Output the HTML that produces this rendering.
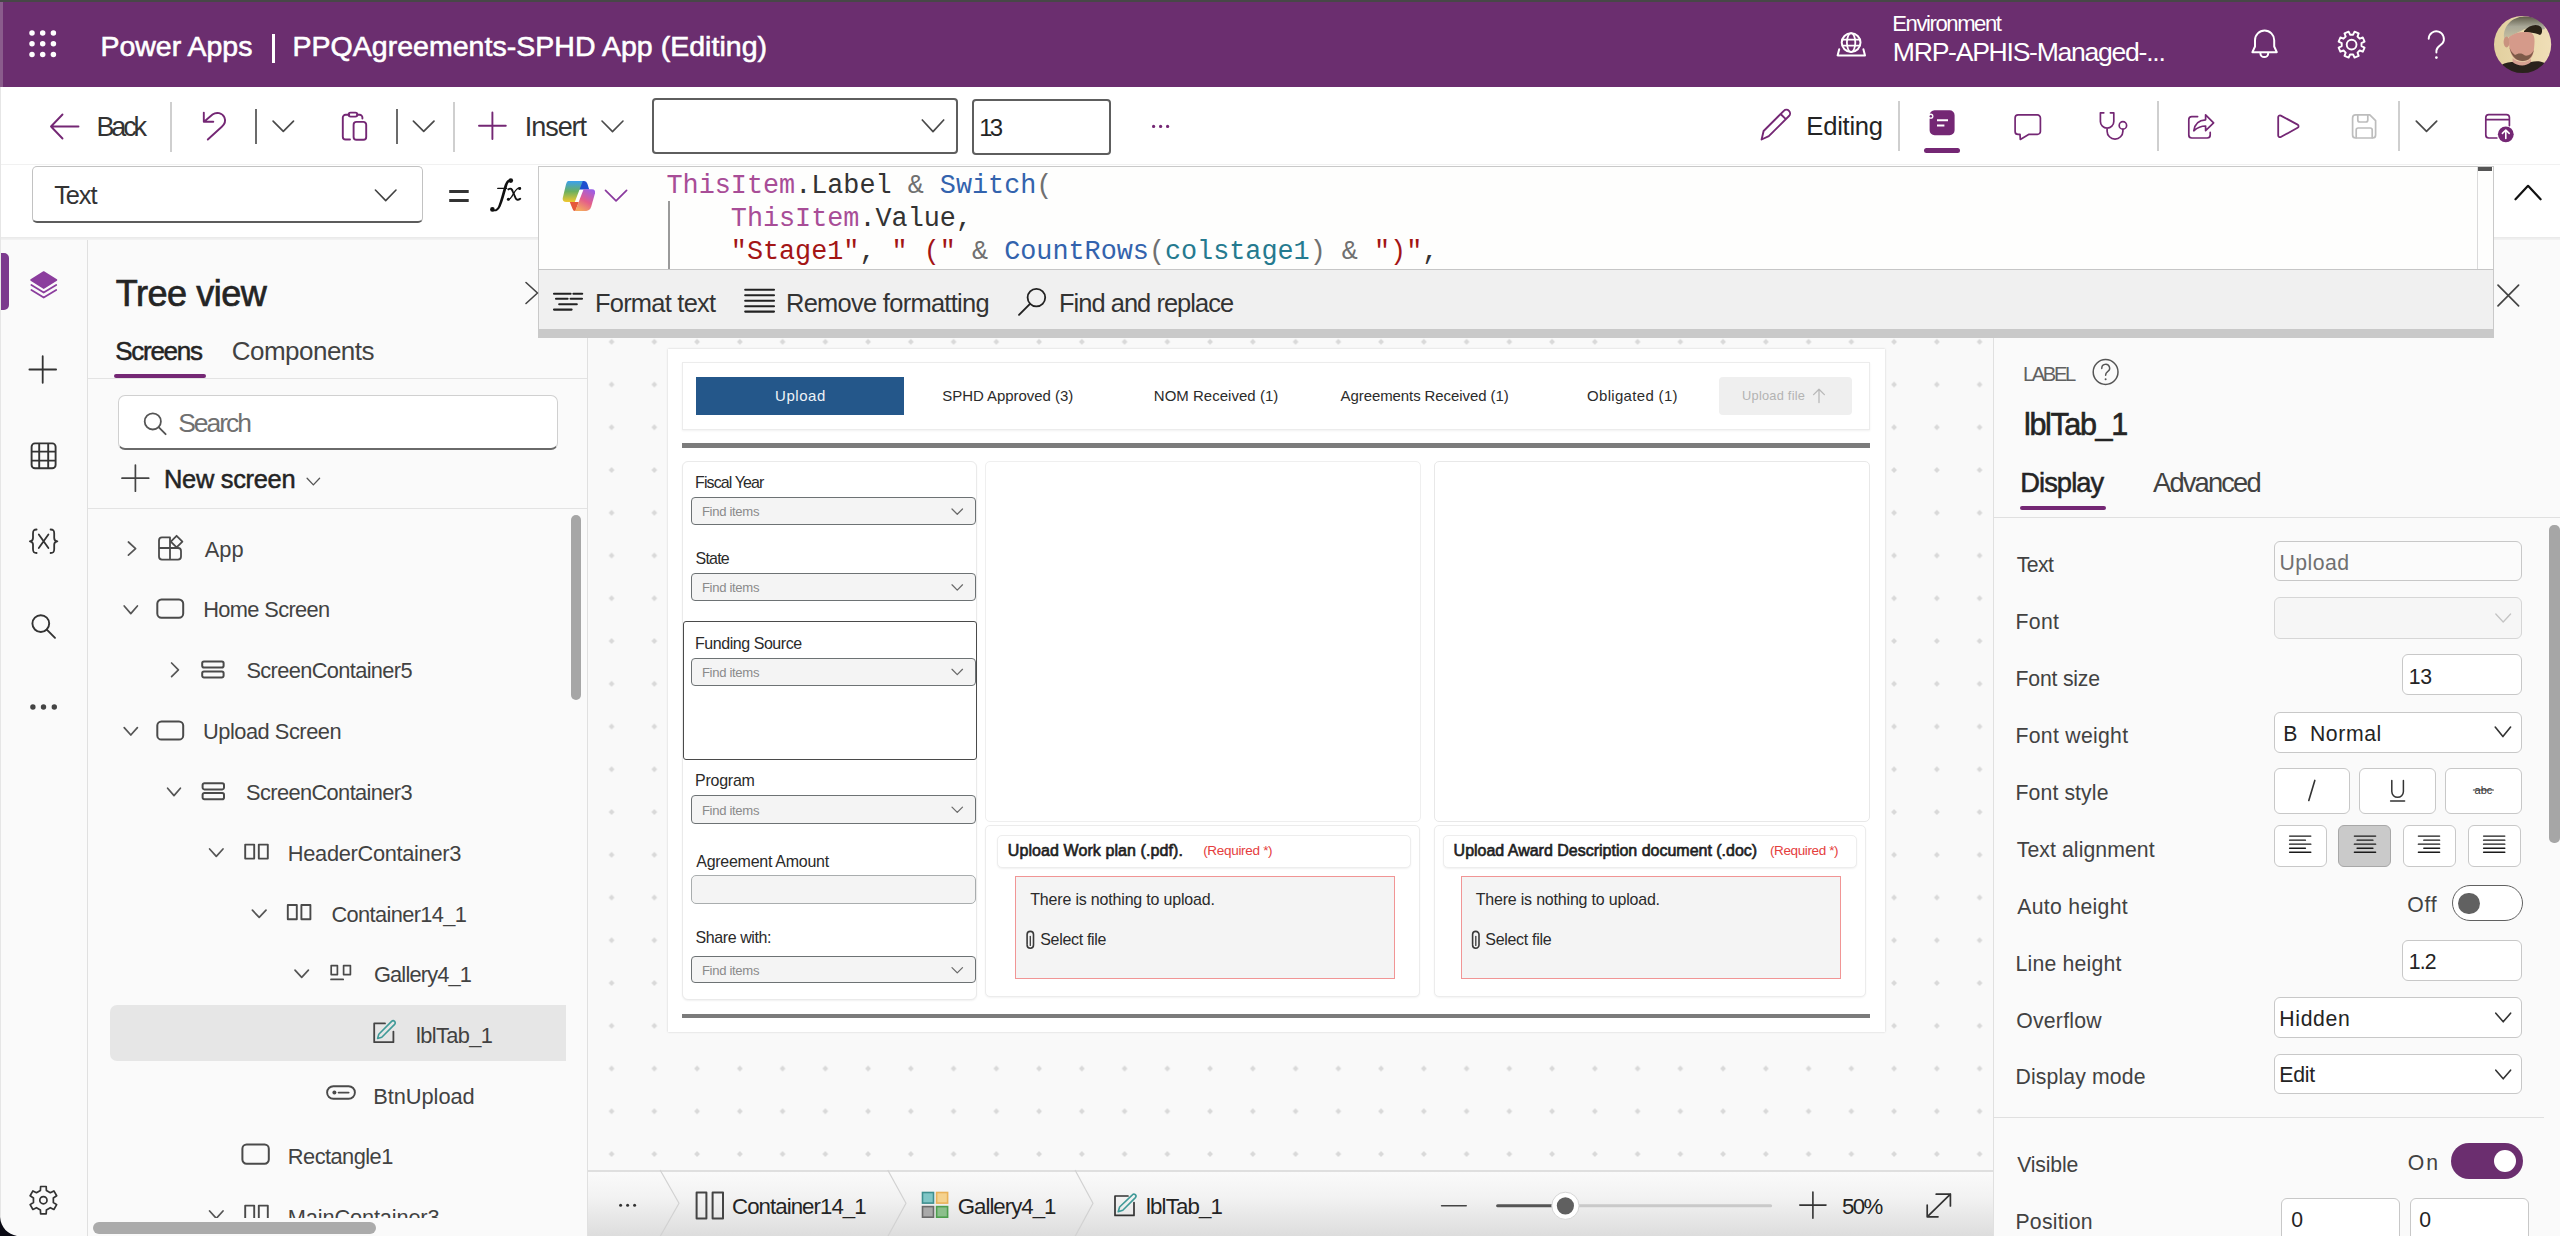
<!DOCTYPE html>
<html><head><meta charset="utf-8"><title>Power Apps</title>
<style>

html,body{margin:0;padding:0;width:2560px;height:1236px;overflow:hidden;background:#fafafa;font-family:"Liberation Sans",sans-serif;}
body{position:relative}
.t{position:absolute;white-space:pre;line-height:1;}
.a{position:absolute;box-sizing:border-box}
svg.ov{position:absolute;left:0;top:0;overflow:visible}

</style></head><body>
<div class="a" style="left:0px;top:0px;width:2560px;height:87px;background:#6b2e6f"></div>
<div class="a" style="left:0px;top:0px;width:2560px;height:2px;background:#474747"></div>
<div class="a" style="left:0px;top:2px;width:3px;height:85px;background:#8a5c8c"></div>
<div class="a" style="left:0px;top:87px;width:2560px;height:79px;background:#ffffff"></div>
<div class="a" style="left:0px;top:87px;width:1px;height:1149px;background:#e6e6e6;z-index:1"></div>
<div class="a" style="left:170px;top:102px;width:1.5999999999999943px;height:50px;background:#cfcfcf"></div>
<div class="a" style="left:255px;top:109px;width:1.6000000000000227px;height:35px;background:#6b6b6b"></div>
<div class="a" style="left:396px;top:109px;width:1.6000000000000227px;height:35px;background:#6b6b6b"></div>
<div class="a" style="left:453px;top:102px;width:1.6000000000000227px;height:50px;background:#cfcfcf"></div>
<div class="a" style="left:1898px;top:101px;width:1.599999999999909px;height:50px;background:#cfcfcf"></div>
<div class="a" style="left:2157px;top:101px;width:1.599999999999909px;height:50px;background:#cfcfcf"></div>
<div class="a" style="left:2398px;top:101px;width:1.599999999999909px;height:50px;background:#cfcfcf"></div>
<div class="a" style="left:652px;top:98.3px;width:305.5px;height:56.000000000000014px;border:2px solid #5e5e5e;border-radius:4px;background:#fff"></div>
<div class="a" style="left:972px;top:98.5px;width:139px;height:56.0px;border:2px solid #5e5e5e;border-radius:4px;background:#fff"></div>
<div class="a" style="left:1924px;top:147.5px;width:36px;height:5.5px;background:#742774;border-radius:3px"></div>
<div class="a" style="left:0px;top:166px;width:2560px;height:71px;background:#ffffff"></div>
<div class="a" style="left:0px;top:163.5px;width:2560px;height:1.0px;background:#f1f1f1"></div>
<div class="a" style="left:0px;top:237px;width:2560px;height:5px;background:linear-gradient(rgba(0,0,0,0.07),rgba(0,0,0,0))"></div>
<div class="a" style="left:31.5px;top:166px;width:391.0px;height:56.5px;border:1px solid #c2c2c2;border-bottom:2px solid #5c5c5c;border-radius:5px;background:#fff"></div>
<div class="a" style="left:0px;top:240px;width:87px;height:996px;background:#fafafa"></div>
<div class="a" style="left:87px;top:240px;width:1px;height:996px;background:#e0e0e0"></div>
<div class="a" style="left:88px;top:240px;width:499px;height:996px;background:#fafafa"></div>
<div class="a" style="left:587px;top:240px;width:1px;height:996px;background:#e0e0e0"></div>
<div class="a" style="left:588px;top:240px;width:1405px;height:930px;background:#f9f9f9"></div>
<div class="a" style="left:1993px;top:240px;width:1px;height:996px;background:#e0e0e0"></div>
<div class="a" style="left:1994px;top:240px;width:566px;height:996px;background:#fafafa"></div>
<div class="a" style="left:1px;top:253px;width:7.5px;height:57px;background:#7c3a8e;border-radius:0 5px 5px 0"></div>
<div class="a" style="left:113.5px;top:373.5px;width:92.5px;height:4.0px;background:#742774;border-radius:2px"></div>
<div class="a" style="left:88px;top:377.5px;width:499px;height:1.0px;background:#e3e3e3"></div>
<div class="a" style="left:117.5px;top:394.5px;width:440.5px;height:55.5px;border:1px solid #d0d0d0;border-bottom:2px solid #6a6a6a;border-radius:7px;background:#fff"></div>
<div class="a" style="left:88px;top:507.5px;width:499px;height:1.0px;background:#e3e3e3"></div>
<div class="a" style="left:571px;top:515px;width:10px;height:185px;background:#a6a6a6;border-radius:5px"></div>
<div class="a" style="left:109.5px;top:1004.5px;width:456.5px;height:56.5px;background:#e6e6e6;border-radius:7px 0 0 7px"></div>
<div class="a" style="left:93px;top:1222px;width:283px;height:12px;background:#ababab;border-radius:6px"></div>
<svg class="ov" width="2560" height="1236" style="left:0;top:0">
<defs><pattern id="dots" x="611.6" y="341.8" width="42.75" height="42.75" patternUnits="userSpaceOnUse"><path d="M-2.9 0 L0 -2.9 L2.9 0 L0 2.9 Z" fill="#d9d9d9"/><path d="M39.85 0 L42.75 -2.9 L45.65 0 L42.75 2.9 Z" fill="#d9d9d9"/><path d="M-2.9 42.75 L0 39.85 L2.9 42.75 L0 45.65 Z" fill="#d9d9d9"/><path d="M39.85 42.75 L42.75 39.85 L45.65 42.75 L42.75 45.65 Z" fill="#d9d9d9"/></pattern></defs>
<rect x="590" y="330" width="1401" height="838" fill="url(#dots)"/></svg>
<div class="a" style="left:667.5px;top:348.5px;width:1217.0px;height:683.5px;background:#fff;box-shadow:0 0 2px rgba(0,0,0,0.18)"></div>
<div class="a" style="left:681.5px;top:362px;width:1188.5px;height:67.5px;background:#fff;border:1px solid #ececec;box-shadow:0 1px 2px rgba(0,0,0,0.06)"></div>
<div class="a" style="left:696px;top:376.5px;width:208px;height:38.0px;background:#24578a"></div>
<div class="a" style="left:1718.5px;top:376.5px;width:133.5px;height:38.0px;background:#efefef;border-radius:4px"></div>
<div class="a" style="left:681.5px;top:443px;width:1188.5px;height:4.5px;background:#7b7b7b"></div>
<div class="a" style="left:681.5px;top:461px;width:295.5px;height:539px;background:#fff;border:1px solid #eaeaea;border-radius:6px;box-shadow:0 1px 2px rgba(0,0,0,0.06)"></div>
<div class="a" style="left:682.5px;top:621px;width:294.0px;height:139px;border:1.5px solid #4a4a4a;border-radius:3px;background:#fff"></div>
<div class="a" style="left:691px;top:497.2px;width:284.5px;height:28.000000000000057px;background:#f4f4f4;border:1.5px solid #6d7274;border-radius:4px"></div>
<div class="a" style="left:691px;top:573px;width:284.5px;height:27.5px;background:#f4f4f4;border:1.5px solid #6d7274;border-radius:4px"></div>
<div class="a" style="left:691px;top:657.5px;width:284.5px;height:28.200000000000045px;background:#f4f4f4;border:1.5px solid #6d7274;border-radius:4px"></div>
<div class="a" style="left:691px;top:795.3px;width:284.5px;height:28.600000000000023px;background:#f4f4f4;border:1.5px solid #6d7274;border-radius:4px"></div>
<div class="a" style="left:691px;top:955.8px;width:284.5px;height:27.700000000000045px;background:#f4f4f4;border:1.5px solid #6d7274;border-radius:4px"></div>
<div class="a" style="left:690.7px;top:874.8px;width:284.9px;height:29.200000000000045px;background:#f4f4f4;border:1px solid #a9adae;border-radius:5px"></div>
<div class="a" style="left:985px;top:461px;width:435.5px;height:361px;background:#fff;border:1px solid #efefef;border-radius:5px"></div>
<div class="a" style="left:1434px;top:461px;width:436px;height:361px;background:#fff;border:1px solid #e8e8e8;border-radius:5px"></div>
<div class="a" style="left:985px;top:825.3px;width:435px;height:172.20000000000005px;background:#fff;border:1px solid #ececec;border-radius:5px;box-shadow:0 1px 2px rgba(0,0,0,0.05)"></div>
<div class="a" style="left:997px;top:834.6px;width:414px;height:33.10000000000002px;background:#fff;border:1px solid #ededed;border-radius:5px;box-shadow:0 1px 2px rgba(0,0,0,0.06)"></div>
<div class="a" style="left:1014.6px;top:875.5px;width:380.4px;height:103.79999999999995px;background:#f4f4f4;border:1.5px solid #f19595"></div>
<div class="a" style="left:1433.8px;top:825.3px;width:432.20000000000005px;height:172.20000000000005px;background:#fff;border:1px solid #ececec;border-radius:5px;box-shadow:0 1px 2px rgba(0,0,0,0.05)"></div>
<div class="a" style="left:1442.5px;top:834.6px;width:414.79999999999995px;height:33.10000000000002px;background:#fff;border:1px solid #ededed;border-radius:5px;box-shadow:0 1px 2px rgba(0,0,0,0.06)"></div>
<div class="a" style="left:1460.6px;top:875.5px;width:380.10000000000014px;height:103.79999999999995px;background:#f4f4f4;border:1.5px solid #f19595"></div>
<div class="a" style="left:682px;top:1014px;width:1188px;height:4.2000000000000455px;background:#7b7b7b"></div>
<div class="a" style="left:588px;top:1170px;width:1405px;height:2px;background:#dfdfdf"></div>
<div class="a" style="left:588px;top:1172px;width:1405px;height:64px;background:linear-gradient(#fafafa,#f2f2f2 40%,#dddddd)"></div>
<div class="a" style="left:538px;top:166px;width:1955.5px;height:104px;background:#fefefd;border:1px solid #c9c9c9"></div>
<div class="a" style="left:2477px;top:167px;width:1px;height:102px;background:#dadada"></div>
<div class="a" style="left:2478px;top:167.3px;width:13.5px;height:3.6999999999999886px;background:#555"></div>
<div class="a" style="left:668.2px;top:201px;width:1.3999999999999773px;height:68px;background:#9a9a9a"></div>
<div class="a" style="left:538px;top:269px;width:1955.5px;height:60.30000000000001px;background:#f0f0f0;border-left:1px solid #c9c9c9;border-right:1px solid #c9c9c9"></div>
<div class="a" style="left:538px;top:329.3px;width:1955.5px;height:8.699999999999989px;background:#c9c9c9"></div>
<div class="a" style="left:538px;top:269px;width:1955.5px;height:1.1999999999999886px;background:#c6c6c6"></div>
<div class="a" style="left:2020px;top:505.5px;width:86px;height:4.0px;background:#742774;border-radius:2px"></div>
<div class="a" style="left:1994px;top:517px;width:566px;height:1px;background:#e0e0e0"></div>
<div class="a" style="left:2549px;top:525px;width:10.5px;height:317.5px;background:#a6a6a6;border-radius:5px"></div>
<div class="a" style="left:2274px;top:540.5px;width:248px;height:40.799999999999955px;border:1px solid #c8c8c8;border-radius:6px;background:#fbfbfb"></div>
<div class="a" style="left:2274px;top:597.2px;width:248px;height:41.5px;border:1px solid #d6d6d6;border-radius:6px;background:#f6f6f6"></div>
<div class="a" style="left:2402px;top:654.3px;width:120px;height:41.10000000000002px;border:1px solid #c8c8c8;border-radius:6px;background:#fff"></div>
<div class="a" style="left:2274px;top:711.7px;width:248px;height:41.09999999999991px;border:1px solid #c8c8c8;border-radius:6px;background:#fff"></div>
<div class="a" style="left:2273.8px;top:768px;width:76.69999999999982px;height:45.60000000000002px;border:1px solid #c8c8c8;border-radius:6px;background:#fff"></div>
<div class="a" style="left:2359.3px;top:768px;width:77.09999999999991px;height:45.60000000000002px;border:1px solid #c8c8c8;border-radius:6px;background:#fff"></div>
<div class="a" style="left:2444.8px;top:768px;width:77.19999999999982px;height:45.60000000000002px;border:1px solid #c8c8c8;border-radius:6px;background:#fff"></div>
<div class="a" style="left:2273.8px;top:825px;width:53.399999999999636px;height:41.89999999999998px;border:1px solid #c8c8c8;border-radius:6px;background:#fff"></div>
<div class="a" style="left:2338.4px;top:825px;width:53.0px;height:41.89999999999998px;border:1px solid #a8a8a8;border-radius:6px;background:#cacaca"></div>
<div class="a" style="left:2402.6px;top:825px;width:53.80000000000018px;height:41.89999999999998px;border:1px solid #c8c8c8;border-radius:6px;background:#fff"></div>
<div class="a" style="left:2467.7px;top:825px;width:53.0px;height:41.89999999999998px;border:1px solid #c8c8c8;border-radius:6px;background:#fff"></div>
<div class="a" style="left:2451.6px;top:885.3px;width:71.09999999999991px;height:35.40000000000009px;border:1.5px solid #616161;border-radius:18px;background:#fff"></div>
<div class="a" style="left:2458.1px;top:892.6px;width:21.59999999999991px;height:21.600000000000023px;background:#616161;border-radius:50%"></div>
<div class="a" style="left:2402.2px;top:939.5px;width:119.80000000000018px;height:41.39999999999998px;border:1px solid #c8c8c8;border-radius:6px;background:#fff"></div>
<div class="a" style="left:2273.8px;top:996.9px;width:248.19999999999982px;height:41.000000000000114px;border:1px solid #c8c8c8;border-radius:6px;background:#fff"></div>
<div class="a" style="left:2273.8px;top:1053.9px;width:248.19999999999982px;height:40.59999999999991px;border:1px solid #c8c8c8;border-radius:6px;background:#fff"></div>
<div class="a" style="left:1994px;top:1117px;width:550px;height:1px;background:#e0e0e0"></div>
<div class="a" style="left:2450.8px;top:1143.4px;width:71.89999999999964px;height:35.399999999999864px;background:#6b2e6f;border-radius:18px"></div>
<div class="a" style="left:2493.6px;top:1150.4px;width:22.0px;height:22.0px;background:#fff;border-radius:50%"></div>
<div class="a" style="left:2281px;top:1197.6px;width:119.40000000000009px;height:52.40000000000009px;border:1px solid #c8c8c8;border-radius:6px;background:#fff"></div>
<div class="a" style="left:2409.5px;top:1197.6px;width:119.30000000000018px;height:52.40000000000009px;border:1px solid #c8c8c8;border-radius:6px;background:#fff"></div>
<svg class="ov" width="2560" height="1236" style="z-index:6"><path d="M0 1217 L0 1236 L17 1236 C8 1234 1 1228 0 1217 Z" fill="#0a0a14"/></svg>
<div class="t" style="left:100.42px;top:31.88px;font-size:28.49px;color:#fff;-webkit-text-stroke:0.6px #fff;">Power Apps</div>
<div class="a" style="left:272.4px;top:34.2px;width:2.5px;height:28.799999999999997px;background:#fff"></div>
<div class="t" style="left:292.52px;top:31.88px;font-size:28.49px;color:#fff;letter-spacing:0.037px;-webkit-text-stroke:0.6px #fff;">PPQAgreements-SPHD App (Editing)</div>
<div class="t" style="left:1892.23px;top:13.30px;font-size:22.09px;color:#fff;letter-spacing:-1.420px;">Environment</div>
<div class="t" style="left:1892.87px;top:39.48px;font-size:26.60px;color:#fff;letter-spacing:-1.281px;">MRP-APHIS-Managed-...</div>
<div class="t" style="left:96.44px;top:113.81px;font-size:27.03px;color:#333;letter-spacing:-3.158px;">Back</div>
<div class="t" style="left:524.87px;top:113.81px;font-size:27.03px;color:#333;letter-spacing:-1.081px;">Insert</div>
<div class="t" style="left:979.20px;top:115.70px;font-size:23.98px;color:#242424;letter-spacing:-2.890px;">13</div>
<div class="t" style="left:1806.35px;top:114.45px;font-size:25.58px;color:#242424;letter-spacing:-0.251px;">Editing</div>
<div class="t" style="left:54.19px;top:183.17px;font-size:25.44px;color:#333;letter-spacing:-1.090px;">Text</div>
<div class="t" style="left:594.97px;top:290.77px;font-size:25.44px;color:#333;letter-spacing:-0.751px;">Format text</div>
<div class="t" style="left:785.97px;top:290.77px;font-size:25.44px;color:#333;letter-spacing:-0.705px;">Remove formatting</div>
<div class="t" style="left:1058.97px;top:290.77px;font-size:25.44px;color:#333;letter-spacing:-0.960px;">Find and replace</div>
<div class="t" style="left:666.50px;top:172.66px;font-family:'Liberation Mono';font-size:26.8px;color:#a84d97">ThisItem</div>
<div class="t" style="left:795.14px;top:172.66px;font-family:'Liberation Mono';font-size:26.8px;color:#333333">.Label</div>
<div class="t" style="left:891.62px;top:172.66px;font-family:'Liberation Mono';font-size:26.8px;color:#707070"> &amp; </div>
<div class="t" style="left:939.86px;top:172.66px;font-family:'Liberation Mono';font-size:26.8px;color:#3363ad">Switch</div>
<div class="t" style="left:1036.34px;top:172.66px;font-family:'Liberation Mono';font-size:26.8px;color:#707070">(</div>
<div class="t" style="left:730.80px;top:205.86px;font-family:'Liberation Mono';font-size:26.8px;color:#a84d97">ThisItem</div>
<div class="t" style="left:859.44px;top:205.86px;font-family:'Liberation Mono';font-size:26.8px;color:#333333">.Value,</div>
<div class="t" style="left:730.80px;top:239.06px;font-family:'Liberation Mono';font-size:26.8px;color:#a31515">"Stage1"</div>
<div class="t" style="left:859.44px;top:239.06px;font-family:'Liberation Mono';font-size:26.8px;color:#333333">, </div>
<div class="t" style="left:891.60px;top:239.06px;font-family:'Liberation Mono';font-size:26.8px;color:#a31515">" ("</div>
<div class="t" style="left:955.92px;top:239.06px;font-family:'Liberation Mono';font-size:26.8px;color:#707070"> &amp; </div>
<div class="t" style="left:1004.16px;top:239.06px;font-family:'Liberation Mono';font-size:26.8px;color:#3363ad">CountRows</div>
<div class="t" style="left:1148.88px;top:239.06px;font-family:'Liberation Mono';font-size:26.8px;color:#707070">(</div>
<div class="t" style="left:1164.96px;top:239.06px;font-family:'Liberation Mono';font-size:26.8px;color:#257a8f">colstage1</div>
<div class="t" style="left:1309.68px;top:239.06px;font-family:'Liberation Mono';font-size:26.8px;color:#707070">)</div>
<div class="t" style="left:1325.76px;top:239.06px;font-family:'Liberation Mono';font-size:26.8px;color:#707070"> &amp; </div>
<div class="t" style="left:1374.00px;top:239.06px;font-family:'Liberation Mono';font-size:26.8px;color:#a31515">")"</div>
<div class="t" style="left:1422.24px;top:239.06px;font-family:'Liberation Mono';font-size:26.8px;color:#333333">,</div>
<div class="t" style="left:115.78px;top:276.29px;font-size:36.05px;color:#242424;letter-spacing:-0.473px;-webkit-text-stroke:0.7px #242424;">Tree view</div>
<div class="t" style="left:115.33px;top:337.58px;font-size:26.02px;color:#242424;letter-spacing:-1.310px;-webkit-text-stroke:0.5px #242424;">Screens</div>
<div class="t" style="left:231.70px;top:337.58px;font-size:26.02px;color:#424242;letter-spacing:-0.523px;">Components</div>
<div class="t" style="left:178.21px;top:409.81px;font-size:26.45px;color:#707070;letter-spacing:-1.982px;">Search</div>
<div class="t" style="left:163.97px;top:466.97px;font-size:25.44px;color:#242424;letter-spacing:-0.301px;-webkit-text-stroke:0.5px #242424;">New screen</div>
<div class="t" style="left:204.70px;top:539.24px;font-size:21.80px;color:#424242;letter-spacing:0.052px;">App</div>
<div class="t" style="left:203.26px;top:599.44px;font-size:21.80px;color:#424242;letter-spacing:-0.642px;">Home Screen</div>
<div class="t" style="left:246.42px;top:659.54px;font-size:21.80px;color:#424242;letter-spacing:-0.637px;">ScreenContainer5</div>
<div class="t" style="left:202.96px;top:721.44px;font-size:21.80px;color:#424242;letter-spacing:-0.463px;">Upload Screen</div>
<div class="t" style="left:246.02px;top:782.14px;font-size:21.80px;color:#424242;letter-spacing:-0.604px;">ScreenContainer3</div>
<div class="t" style="left:287.86px;top:842.54px;font-size:21.80px;color:#424242;letter-spacing:-0.315px;">HeaderContainer3</div>
<div class="t" style="left:331.41px;top:903.54px;font-size:21.80px;color:#424242;letter-spacing:-0.620px;">Container14_1</div>
<div class="t" style="left:373.91px;top:964.14px;font-size:21.80px;color:#424242;letter-spacing:-0.815px;">Gallery4_1</div>
<div class="t" style="left:416.08px;top:1024.84px;font-size:21.80px;color:#424242;letter-spacing:-0.613px;">lblTab_1</div>
<div class="t" style="left:373.26px;top:1085.54px;font-size:21.80px;color:#424242;letter-spacing:-0.042px;">BtnUpload</div>
<div class="t" style="left:287.86px;top:1146.24px;font-size:21.80px;color:#424242;letter-spacing:-0.539px;">Rectangle1</div>
<div class="a" style="left:200px;top:1190px;width:380px;height:28px;overflow:hidden">
<div class="t" style="left:87.86px;top:16.84px;font-size:21.80px;color:#424242;letter-spacing:-0.167px;">MainContainer3</div>
</div>
<div class="t" style="left:775.08px;top:388.53px;font-size:14.97px;color:#eef2f7;letter-spacing:0.559px;">Upload</div>
<div class="t" style="left:942.33px;top:388.53px;font-size:14.97px;color:#2b2b2b;letter-spacing:-0.035px;">SPHD Approved (3)</div>
<div class="t" style="left:1153.80px;top:388.53px;font-size:14.97px;color:#2b2b2b;letter-spacing:0.034px;">NOM Received (1)</div>
<div class="t" style="left:1340.60px;top:388.53px;font-size:14.97px;color:#2b2b2b;letter-spacing:-0.076px;">Agreements Received (1)</div>
<div class="t" style="left:1587.03px;top:388.53px;font-size:14.97px;color:#2b2b2b;letter-spacing:0.333px;">Obligated (1)</div>
<div class="t" style="left:1742.04px;top:389.67px;font-size:12.79px;color:#b3b3b3;letter-spacing:0.255px;">Upload file</div>
<div class="t" style="left:695.02px;top:475.37px;font-size:15.99px;color:#2a2a2a;letter-spacing:-0.891px;">Fiscal Year</div>
<div class="t" style="left:695.58px;top:551.47px;font-size:15.99px;color:#2a2a2a;letter-spacing:-0.814px;">State</div>
<div class="t" style="left:695.02px;top:636.17px;font-size:15.99px;color:#2a2a2a;letter-spacing:-0.442px;">Funding Source</div>
<div class="t" style="left:695.02px;top:773.27px;font-size:15.99px;color:#2a2a2a;letter-spacing:-0.237px;">Program</div>
<div class="t" style="left:696.30px;top:853.97px;font-size:15.99px;color:#2a2a2a;letter-spacing:-0.267px;">Agreement Amount</div>
<div class="t" style="left:695.58px;top:930.47px;font-size:15.99px;color:#2a2a2a;letter-spacing:-0.416px;">Share with:</div>
<div class="t" style="left:701.95px;top:505.43px;font-size:13.08px;color:#8a8a8a;letter-spacing:-0.315px;">Find items</div>
<div class="t" style="left:701.95px;top:581.23px;font-size:13.08px;color:#8a8a8a;letter-spacing:-0.315px;">Find items</div>
<div class="t" style="left:701.95px;top:665.73px;font-size:13.08px;color:#8a8a8a;letter-spacing:-0.315px;">Find items</div>
<div class="t" style="left:701.95px;top:803.53px;font-size:13.08px;color:#8a8a8a;letter-spacing:-0.315px;">Find items</div>
<div class="t" style="left:701.95px;top:964.03px;font-size:13.08px;color:#8a8a8a;letter-spacing:-0.315px;">Find items</div>
<div class="t" style="left:1007.80px;top:843.17px;font-size:15.99px;color:#1f1f1f;letter-spacing:0.092px;-webkit-text-stroke:0.65px #1f1f1f;">Upload Work plan (.pdf).</div>
<div class="t" style="left:1203.19px;top:843.56px;font-size:13.52px;color:#e53d3d;letter-spacing:-0.316px;">(Required *)</div>
<div class="t" style="left:1030.28px;top:891.87px;font-size:15.99px;color:#2a2a2a;letter-spacing:-0.177px;">There is nothing to upload.</div>
<div class="t" style="left:1040.28px;top:932.47px;font-size:15.99px;color:#2a2a2a;letter-spacing:-0.314px;">Select file</div>
<div class="t" style="left:1453.60px;top:843.17px;font-size:15.99px;color:#1f1f1f;-webkit-text-stroke:0.65px #1f1f1f;">Upload Award Description document (.doc)</div>
<div class="t" style="left:1769.99px;top:843.56px;font-size:13.52px;color:#e53d3d;letter-spacing:-0.389px;">(Required *)</div>
<div class="t" style="left:1475.68px;top:891.87px;font-size:15.99px;color:#2a2a2a;letter-spacing:-0.188px;">There is nothing to upload.</div>
<div class="t" style="left:1485.28px;top:932.47px;font-size:15.99px;color:#2a2a2a;letter-spacing:-0.294px;">Select file</div>
<div class="t" style="left:732.09px;top:1195.68px;font-size:22.24px;color:#242424;letter-spacing:-0.946px;">Container14_1</div>
<div class="t" style="left:957.79px;top:1195.68px;font-size:22.24px;color:#242424;letter-spacing:-0.989px;">Gallery4_1</div>
<div class="t" style="left:1146.05px;top:1195.68px;font-size:22.24px;color:#242424;letter-spacing:-0.867px;">lblTab_1</div>
<div class="t" style="left:1842.11px;top:1195.68px;font-size:22.24px;color:#242424;letter-spacing:-1.730px;">50%</div>
<div class="t" style="left:2022.88px;top:364.40px;font-size:20.20px;color:#616161;letter-spacing:-2.363px;">LABEL</div>
<div class="t" style="left:2024.02px;top:409.16px;font-size:30.52px;color:#242424;letter-spacing:-1.358px;-webkit-text-stroke:0.6px #242424;">lblTab_1</div>
<div class="t" style="left:2020.21px;top:468.87px;font-size:27.33px;color:#242424;letter-spacing:-0.935px;-webkit-text-stroke:0.5px #242424;">Display</div>
<div class="t" style="left:2153.00px;top:468.87px;font-size:27.33px;color:#424242;letter-spacing:-1.838px;">Advanced</div>
<div class="t" style="left:2016.78px;top:553.74px;font-size:21.22px;color:#424242;letter-spacing:-0.611px;">Text</div>
<div class="t" style="left:2015.50px;top:611.04px;font-size:21.22px;color:#424242;letter-spacing:0.332px;">Font</div>
<div class="t" style="left:2015.50px;top:667.94px;font-size:21.22px;color:#424242;letter-spacing:-0.191px;">Font size</div>
<div class="t" style="left:2015.50px;top:724.84px;font-size:21.22px;color:#424242;letter-spacing:0.286px;">Font weight</div>
<div class="t" style="left:2015.50px;top:782.24px;font-size:21.22px;color:#424242;letter-spacing:0.109px;">Font style</div>
<div class="t" style="left:2016.78px;top:839.24px;font-size:21.22px;color:#424242;letter-spacing:0.081px;">Text alignment</div>
<div class="t" style="left:2017.20px;top:895.84px;font-size:21.22px;color:#424242;letter-spacing:0.319px;">Auto height</div>
<div class="t" style="left:2015.50px;top:952.84px;font-size:21.22px;color:#424242;letter-spacing:0.202px;">Line height</div>
<div class="t" style="left:2016.25px;top:1009.84px;font-size:21.22px;color:#424242;letter-spacing:0.225px;">Overflow</div>
<div class="t" style="left:2015.50px;top:1066.44px;font-size:21.22px;color:#424242;letter-spacing:0.128px;">Display mode</div>
<div class="t" style="left:2017.20px;top:1153.54px;font-size:21.22px;color:#424242;letter-spacing:-0.159px;">Visible</div>
<div class="t" style="left:2015.50px;top:1210.94px;font-size:21.22px;color:#424242;letter-spacing:0.214px;">Position</div>
<div class="t" style="left:2279.41px;top:552.04px;font-size:21.22px;color:#707070;letter-spacing:0.488px;">Upload</div>
<div class="t" style="left:2408.81px;top:666.24px;font-size:21.22px;color:#242424;letter-spacing:-0.239px;">13</div>
<div class="t" style="left:2283.30px;top:722.64px;font-size:21.22px;color:#242424;">B</div>
<div class="t" style="left:2309.90px;top:722.64px;font-size:21.22px;color:#242424;letter-spacing:0.606px;">Normal</div>
<div class="t" style="left:2407.35px;top:893.84px;font-size:21.22px;color:#424242;letter-spacing:0.747px;">Off</div>
<div class="t" style="left:2408.71px;top:950.84px;font-size:21.22px;color:#242424;letter-spacing:-0.815px;">1.2</div>
<div class="t" style="left:2279.30px;top:1007.84px;font-size:21.22px;color:#242424;letter-spacing:0.649px;">Hidden</div>
<div class="t" style="left:2279.30px;top:1064.44px;font-size:21.22px;color:#242424;letter-spacing:-0.203px;">Edit</div>
<div class="t" style="left:2407.75px;top:1151.54px;font-size:21.22px;color:#424242;letter-spacing:2.044px;">On</div>
<div class="t" style="left:2291.26px;top:1209.04px;font-size:21.22px;color:#242424;">0</div>
<div class="t" style="left:2419.26px;top:1209.04px;font-size:21.22px;color:#242424;">0</div>
<svg class="ov" width="2560" height="1236" style="z-index:5"><circle cx="32" cy="33" r="2.75" fill="#fff"/>
<circle cx="42.7" cy="33" r="2.75" fill="#fff"/>
<circle cx="53.4" cy="33" r="2.75" fill="#fff"/>
<circle cx="32" cy="43.7" r="2.75" fill="#fff"/>
<circle cx="42.7" cy="43.7" r="2.75" fill="#fff"/>
<circle cx="53.4" cy="43.7" r="2.75" fill="#fff"/>
<circle cx="32" cy="54.4" r="2.75" fill="#fff"/>
<circle cx="42.7" cy="54.4" r="2.75" fill="#fff"/>
<circle cx="53.4" cy="54.4" r="2.75" fill="#fff"/>
<path d="M1839.2 49.2 L1837.6 55.4 L1865 55.4 L1863.4 49.2" fill="none" stroke="#fff" stroke-width="2" stroke-linecap="round" stroke-linejoin="round" />
<circle cx="1851.1" cy="42.6" r="10.6" fill="#6b2e6f"/>
<circle cx="1851.1" cy="42.6" r="9.4" fill="none" stroke="#fff" stroke-width="2"/>
<ellipse cx="1851.1" cy="42.6" rx="4.2" ry="9.4" fill="none" stroke="#fff" stroke-width="1.8"/>
<path d="M1842.5 39.6 H1859.7 M1842.5 45.6 H1859.7" fill="none" stroke="#fff" stroke-width="1.8" stroke-linecap="round" stroke-linejoin="round" />
<path d="M2252.4 52.2 L2255 46.5 V40.2 A9.6 9.6 0 0 1 2274.2 40.2 V46.5 L2276.8 52.2 Z" fill="none" stroke="#fff" stroke-width="2" stroke-linecap="round" stroke-linejoin="round" />
<path d="M2260.4 53.2 A3.9 3.9 0 0 0 2268.2 53.2" fill="none" stroke="#fff" stroke-width="2" stroke-linecap="round" stroke-linejoin="round" />
<path d="M2361.48 46.12 L2364.57 47.54 L2362.85 51.70 L2359.66 50.51 L2357.51 52.66 L2358.70 55.85 L2354.54 57.57 L2353.12 54.48 L2350.08 54.48 L2348.66 57.57 L2344.50 55.85 L2345.69 52.66 L2343.54 50.51 L2340.35 51.70 L2338.63 47.54 L2341.72 46.12 L2341.72 43.08 L2338.63 41.66 L2340.35 37.50 L2343.54 38.69 L2345.69 36.54 L2344.50 33.35 L2348.66 31.63 L2350.08 34.72 L2353.12 34.72 L2354.54 31.63 L2358.70 33.35 L2357.51 36.54 L2359.66 38.69 L2362.85 37.50 L2364.57 41.66 L2361.48 43.08 Z" fill="none" stroke="#fff" stroke-width="1.9" stroke-linecap="round" stroke-linejoin="round" />
<circle cx="2351.6" cy="44.6" r="4.9" fill="none" stroke="#fff" stroke-width="1.9"/>
<path d="M2428.7 38.8 A7.6 7.6 0 1 1 2442.6 43.2 C2440.5 45.6 2436.6 47 2436.4 50.6 V52.6" fill="none" stroke="#fff" stroke-width="1.9" stroke-linecap="round" stroke-linejoin="round" />
<circle cx="2436.4" cy="57.6" r="1.35" fill="#fff"/>
<defs><clipPath id="av"><circle cx="2522.6" cy="44.5" r="28.6"/></clipPath>
<linearGradient id="avbg" x1="0" y1="0" x2="1" y2="0"><stop offset="0" stop-color="#e2cf9e"/><stop offset="1" stop-color="#f0dfb8"/></linearGradient>
<linearGradient id="cap" x1="0" y1="0" x2="0" y2="1"><stop offset="0" stop-color="#5e5a48"/><stop offset="0.45" stop-color="#a9a898"/><stop offset="1" stop-color="#c8c0a0"/></linearGradient></defs>
<g clip-path="url(#av)"><g filter="url(#avblur)">
<rect x="2493" y="15" width="60" height="60" fill="url(#avbg)"/>
<path d="M2504 38 C2503 26 2512 17 2524 16.5 C2536 16 2544 21 2545 29 L2541 30 C2535 26 2527 27 2521 31 C2515 34 2510 36 2506 39 Z" fill="url(#cap)"/>
<path d="M2524 31 C2529 25 2537 23 2541 27 C2543 30 2542 34 2540 35 C2536 33 2530 32 2524 33 Z" fill="#2a2119"/>
<ellipse cx="2506.6" cy="42" rx="3" ry="5.4" fill="#c9937f"/>
<path d="M2509 37 C2514 33 2522 31 2530 32.5 C2534 33.5 2535 38 2534.4 44 C2534 50 2533.6 56 2530 59 C2526 62 2518 62 2514 58 C2510 54 2508.6 46 2509 37 Z" fill="#d59a8a"/>
<path d="M2509.4 47 C2511 55 2515 60.4 2522 61 C2528 61.4 2532 58 2533.8 50 C2532 54 2529 56 2525 55.6 C2522 52.6 2518 53 2515 55 C2512 53 2510.4 50 2509.4 47 Z" fill="#7d5a48"/>
<path d="M2512.6 58 C2516 62 2524 63.6 2531 59 L2531 66 L2512.6 66 Z" fill="#d8a292"/>
<path d="M2497 68 C2502 63.6 2508 61.6 2512.6 62 C2517 66 2526 67 2531 62 C2537 60.4 2544 61 2549 66 L2552 76 L2496 76 Z" fill="#2c201b"/>
</g></g><defs><filter id="avblur" x="-10%" y="-10%" width="120%" height="120%"><feGaussianBlur stdDeviation="0.7"/></filter></defs>
<path d="M51 126.5 H78.5 M62.5 114.5 L51 126.5 L62.5 138.5" fill="none" stroke="#742774" stroke-width="1.9" stroke-linecap="round" stroke-linejoin="round" />
<path d="M203.8 112.6 V121.8 H213.3 M204.6 121.2 L212.5 114.6 C216.5 111.6 222.3 112.8 224.4 117.4 C225.9 121 224.6 124.3 221.8 126.8 L207.8 139.5" fill="none" stroke="#742774" stroke-width="1.9" stroke-linecap="round" stroke-linejoin="round" />
<path d="M273.1 121.2 L283.3 131.4 L293.5 121.2" fill="none" stroke="#4a4a4a" stroke-width="1.7" stroke-linecap="round" stroke-linejoin="round" />
<path d="M350 139.5 H345.6 A2.8 2.8 0 0 1 342.8 136.7 V117.6 A2.8 2.8 0 0 1 345.6 114.8 H349.2 M357.2 114.8 H359.6 A2.8 2.8 0 0 1 362.4 117.6 V118.6" fill="none" stroke="#742774" stroke-width="1.9" stroke-linecap="round" stroke-linejoin="round" />
<path d="M350.6 112.6 H355.4 A2 2 0 0 1 355.4 116.6 H350.6 A2 2 0 0 1 350.6 112.6 Z" fill="none" stroke="#742774" stroke-width="1.9" stroke-linecap="round" stroke-linejoin="round" />
<path d="M356.4 121.9 H363.4 A2.8 2.8 0 0 1 366.2 124.7 V137 A2.8 2.8 0 0 1 363.4 139.8 H356.4 A2.8 2.8 0 0 1 353.6 137 V124.7 A2.8 2.8 0 0 1 356.4 121.9 Z" fill="none" stroke="#742774" stroke-width="1.9" stroke-linecap="round" stroke-linejoin="round" />
<path d="M413.4 121.2 L423.7 131.4 L434 121.2" fill="none" stroke="#4a4a4a" stroke-width="1.7" stroke-linecap="round" stroke-linejoin="round" />
<path d="M492.4 112.5 V139 M479 125.8 H505.8" fill="none" stroke="#742774" stroke-width="1.9" stroke-linecap="round" stroke-linejoin="round" />
<path d="M602 121 L612.5 131.6 L623 121" fill="none" stroke="#4a4a4a" stroke-width="1.6" stroke-linecap="round" stroke-linejoin="round" />
<path d="M922.3 120 L933.0 131.6 L943.7 120" fill="none" stroke="#4a4a4a" stroke-width="1.7" stroke-linecap="round" stroke-linejoin="round" />
<circle cx="1153.6" cy="126.4" r="1.6" fill="#742774"/>
<circle cx="1160.6" cy="126.4" r="1.6" fill="#742774"/>
<circle cx="1167.6" cy="126.4" r="1.6" fill="#742774"/>
<path d="M1761.6 139.5 L1763.6 131 L1783.8 110.8 A3.6 3.6 0 0 1 1789 116 L1768.8 136.2 Z M1780.6 114 L1785.8 119.2" fill="none" stroke="#742774" stroke-width="1.9" stroke-linecap="round" stroke-linejoin="round" />
<path d="M1934.5 110.2 H1949.6 A5 5 0 0 1 1954.6 115.2 V130.2 A5 5 0 0 1 1949.6 135.2 H1934.6 A5 5 0 0 1 1929.6 130.2 V115.2 A5 5 0 0 1 1934.5 110.2 Z" fill="#742774" />
<circle cx="1930.8" cy="116.2" r="2.6" fill="#fff"/>
<circle cx="1930.8" cy="116.2" r="1.2" fill="#742774"/>
<path d="M1937 119.2 H1948 V121.2 H1937 Z M1937 124.6 H1944.4 V126.6 H1937 Z" fill="#fff" />
<path d="M2028.6 134.4 H2037.4 A3 3 0 0 0 2040.4 131.4 V117.9 A3 3 0 0 0 2037.4 114.9 H2018.1 A3 3 0 0 0 2015.1 117.9 V131.4 A3 3 0 0 0 2018.1 134.4 H2020 L2020.3 139.4 Z" fill="none" stroke="#742774" stroke-width="1.7" stroke-linecap="round" stroke-linejoin="round" />
<path d="M2103.8 112.8 H2100.4 V121.4 A6.7 6.7 0 0 0 2113.8 121.4 V112.8 H2110.4 M2107.1 128.2 V131.2 A7.9 7.9 0 0 0 2122.9 131.2 V129.4" fill="none" stroke="#742774" stroke-width="1.7" stroke-linecap="round" stroke-linejoin="round" />
<circle cx="2122.9" cy="125.4" r="3.7" fill="none" stroke="#742774" stroke-width="1.7"/>
<path d="M2197.6 116.6 H2191.8 A3 3 0 0 0 2188.8 119.6 V135 A3 3 0 0 0 2191.8 138 H2207.2 A3 3 0 0 0 2210.2 135 V132.4" fill="none" stroke="#742774" stroke-width="1.7" stroke-linecap="round" stroke-linejoin="round" />
<path d="M2193.8 130.8 C2194.6 124.4 2198.8 120.2 2205.6 119.8 V114.8 L2213.6 122.8 L2205.6 130.6 V126 C2201.2 126 2197.4 127.6 2193.8 130.8 Z" fill="none" stroke="#742774" stroke-width="1.7" stroke-linecap="round" stroke-linejoin="round" />
<path d="M2278.2 117.4 V135.4 A1.8 1.8 0 0 0 2280.8 137 L2297.6 127.8 A1.8 1.8 0 0 0 2297.6 124.6 L2280.8 115.6 A1.8 1.8 0 0 0 2278.2 117.4 Z" fill="none" stroke="#742774" stroke-width="1.8" stroke-linecap="round" stroke-linejoin="round" />
<path d="M2355.6 114.9 H2369.8 L2375.6 120.7 V135 A3 3 0 0 1 2372.6 138 H2355.6 A3 3 0 0 1 2352.6 135 V117.9 A3 3 0 0 1 2355.6 114.9 Z" fill="none" stroke="#bdbdbd" stroke-width="1.7" stroke-linecap="round" stroke-linejoin="round" />
<path d="M2357.8 115.2 V120 A2 2 0 0 0 2359.8 122 H2365.8 A2 2 0 0 0 2367.8 120 V115.2 M2356.2 137.6 V130 A2 2 0 0 1 2358.2 128 H2370.2 A2 2 0 0 1 2372.2 130 V137.6" fill="none" stroke="#bdbdbd" stroke-width="1.7" stroke-linecap="round" stroke-linejoin="round" />
<path d="M2416.3 121.1 L2426.5 131.3 L2436.7 121.1" fill="none" stroke="#4a4a4a" stroke-width="1.7" stroke-linecap="round" stroke-linejoin="round" />
<path d="M2496.8 138 H2488.8 A3 3 0 0 1 2485.8 135 V117.6 A3 3 0 0 1 2488.8 114.6 H2506.4 A3 3 0 0 1 2509.4 117.6 V125.6 M2486 119.6 H2509.2" fill="none" stroke="#742774" stroke-width="1.7" stroke-linecap="round" stroke-linejoin="round" />
<circle cx="2505.8" cy="134.3" r="7.9" fill="#742774"/>
<path d="M2505.8 138.4 V130.2 M2502.4 133.4 L2505.8 130 L2509.2 133.4" fill="none" stroke="#fff" stroke-width="1.6" stroke-linecap="round" stroke-linejoin="round" />
<path d="M375.4 190 L385.7 200.6 L396 190" fill="none" stroke="#424242" stroke-width="1.6" stroke-linecap="round" stroke-linejoin="round" />
<path d="M449.2 189.9 H468.7 V193.1 H449.2 Z M449.2 198.9 H468.7 V202.1 H449.2 Z" fill="#333" />
<defs>
<linearGradient id="cpl" x1="0" y1="0" x2="0" y2="1"><stop offset="0" stop-color="#3aa0f0"/><stop offset="0.5" stop-color="#6ab060"/><stop offset="1" stop-color="#f0c830"/></linearGradient>
<linearGradient id="cpr" x1="0.8" y1="0" x2="0.3" y2="1"><stop offset="0" stop-color="#9a5ee8"/><stop offset="0.55" stop-color="#e45e8a"/><stop offset="1" stop-color="#f4a860"/></linearGradient></defs>
<path d="M580 180.9 H584.2 Q586.6 180.9 587.4 183.8 L589.2 189.6 H578.6 Z" fill="#1f50cf"/>
<path d="M568.4 180.9 H582.8 L574.8 201.9 H566.2 Q562.3 201.9 562.7 198.2 L565.9 184.8 Q566.8 180.9 568.4 180.9 Z" fill="url(#cpl)"/>
<path d="M569.8 201.9 H578.8 L575.4 210.9 H575 Q573 210.9 572.4 208.4 Z" fill="#e5593a"/>
<path d="M583.6 189.2 H592 Q595.6 189.2 595 193.2 L591.2 206.8 Q590 210.9 586.2 210.9 H575.2 Z" fill="url(#cpr)"/>
<path d="M605.5 190.3 L616.05 200.9 L626.6 190.3" fill="none" stroke="#8a3a9e" stroke-width="1.7" stroke-linecap="round" stroke-linejoin="round" />
<path d="M491.2 207.6 C492.6 210.6 496.4 210.4 498.2 206.2 C500.4 200.6 502.2 193 504.2 186.2 C505.8 181.2 507.6 179.4 510.2 179.2 L510.6 181.4 C508.8 181.8 507.8 183.6 506.8 187.2 C504.8 194 503 201 500.6 206.4 C498.4 211 495.4 212 492.6 211 Z" fill="#111" />
<circle cx="510.8" cy="180.6" r="2.3" fill="#111"/>
<circle cx="492.4" cy="209.4" r="2.3" fill="#111"/>
<path d="M497.8 188.4 H506.6" fill="none" stroke="#111" stroke-width="1.4" stroke-linecap="round" stroke-linejoin="round" />
<path d="M508.4 189.4 C510.4 187.6 512 189 513 192 L515.6 198.2 C516.4 200 518 200.4 520.2 198.8" fill="none" stroke="#111" stroke-width="1.9" stroke-linecap="round" stroke-linejoin="round" />
<path d="M520.4 188 C518.4 187.6 516 189.4 513.8 193.2 L511.6 196.8 C510.4 199 509 200 507.6 199.4" fill="none" stroke="#111" stroke-width="1.3" stroke-linecap="round" stroke-linejoin="round" />
<circle cx="519.6" cy="188.6" r="1.5" fill="#111"/>
<circle cx="508.4" cy="199.2" r="1.5" fill="#111"/>
<path d="M2515.5 199.3 L2528.05 185.8 L2540.6 199.3" fill="none" stroke="#111" stroke-width="2.2" stroke-linecap="round" stroke-linejoin="round" />
<path d="M2498 285.2 L2518.6 305.8 M2518.6 285.2 L2498 305.8" fill="none" stroke="#444" stroke-width="1.7" stroke-linecap="round" stroke-linejoin="round" />
<path d="M554 293.7 H570.6 M573.4 293.7 H582.2 M556 298.8 H567.6 M570.6 298.8 H582 M559.2 304.2 H576.8 M554 309.6 H571.6" fill="none" stroke="#222" stroke-width="2.1" stroke-linecap="round" stroke-linejoin="round" stroke-linecap="butt"/>
<path d="M745.2 289.8 H774 M745.2 295.2 H774 M745.2 300.7 H774 M745.2 306.2 H774 M745.2 311.6 H774" fill="none" stroke="#222" stroke-width="2.1" stroke-linecap="round" stroke-linejoin="round" stroke-linecap="butt"/>
<circle cx="1036.4" cy="297.6" r="8.8" fill="none" stroke="#222" stroke-width="1.8"/>
<path d="M1030 303.8 L1019 314.8" fill="none" stroke="#222" stroke-width="1.9" stroke-linecap="round" stroke-linejoin="round" />
<path d="M43.7 272 L56.5 280 L43.7 288.2 L31 280 Z" fill="#8b3d9d" stroke="#8b3d9d" stroke-width="1.5" stroke-linejoin="round"/>
<path d="M31.4 285 L43.7 292.6 L56.2 285 M31.4 290 L43.7 297.6 L56.2 290" fill="none" stroke="#8b3d9d" stroke-width="1.8" stroke-linecap="round" stroke-linejoin="round" />
<path d="M42.7 356.2 V382.8 M29.4 369.5 H56.1" fill="none" stroke="#333" stroke-width="1.8" stroke-linecap="round" stroke-linejoin="round" />
<path d="M35 443.4 H52.2 A3.4 3.4 0 0 1 55.6 446.8 V464.9 A3.4 3.4 0 0 1 52.2 468.3 H35 A3.4 3.4 0 0 1 31.6 464.9 V446.8 A3.4 3.4 0 0 1 35 443.4 Z M39.2 443.4 V468.3 M48.2 443.4 V468.3 M31.6 451.6 H55.6 M31.6 460.6 H55.6" fill="none" stroke="#333" stroke-width="1.9" stroke-linecap="round" stroke-linejoin="round" />
<path d="M36.6 529.5 C33.4 529.5 33 531 33 533.6 V538 C33 540 31.8 541.2 29.8 541.3 C31.8 541.4 33 542.6 33 544.6 V549 C33 551.6 33.4 553 36.6 553" fill="none" stroke="#333" stroke-width="1.8" stroke-linecap="round" stroke-linejoin="round" />
<path d="M50.6 529.5 C53.8 529.5 54.2 531 54.2 533.6 V538 C54.2 540 55.4 541.2 57.4 541.3 C55.4 541.4 54.2 542.6 54.2 544.6 V549 C54.2 551.6 53.8 553 50.6 553" fill="none" stroke="#333" stroke-width="1.8" stroke-linecap="round" stroke-linejoin="round" />
<path d="M38.8 534.4 L48.4 548 M48.4 534.4 L38.8 548" fill="none" stroke="#333" stroke-width="1.8" stroke-linecap="round" stroke-linejoin="round" />
<circle cx="40.8" cy="623.6" r="8.4" fill="none" stroke="#333" stroke-width="1.9"/>
<path d="M46.8 629.6 L55 637.8" fill="none" stroke="#333" stroke-width="1.9" stroke-linecap="round" stroke-linejoin="round" />
<circle cx="32.9" cy="707" r="2.7" fill="#444"/>
<circle cx="43.5" cy="707" r="2.7" fill="#444"/>
<circle cx="54.3" cy="707" r="2.7" fill="#444"/>
<path d="M40.39 1190.46 L40.62 1186.48 L46.18 1186.48 L46.41 1190.46 L50.33 1192.72 L53.89 1190.93 L56.67 1195.75 L53.35 1197.94 L53.35 1202.46 L56.67 1204.65 L53.89 1209.47 L50.33 1207.68 L46.41 1209.94 L46.18 1213.92 L40.62 1213.92 L40.39 1209.94 L36.47 1207.68 L32.91 1209.47 L30.13 1204.65 L33.45 1202.46 L33.45 1197.94 L30.13 1195.75 L32.91 1190.93 L36.47 1192.72 Z" fill="none" stroke="#333" stroke-width="1.7" stroke-linecap="round" stroke-linejoin="round" />
<circle cx="43.4" cy="1200.2" r="3.6" fill="none" stroke="#333" stroke-width="1.7"/>
<path d="M526 282.5 L537.5 293.0 L526 303.5" fill="none" stroke="#444" stroke-width="1.6" stroke-linecap="round" stroke-linejoin="round" />
<circle cx="152.8" cy="421.4" r="8.1" fill="none" stroke="#555" stroke-width="1.8"/>
<path d="M158.6 427.2 L165.6 434.2" fill="none" stroke="#555" stroke-width="1.9" stroke-linecap="round" stroke-linejoin="round" />
<path d="M135.4 465 V491.2 M122 478.2 H148.7" fill="none" stroke="#444" stroke-width="1.7" stroke-linecap="round" stroke-linejoin="round" />
<path d="M307.1 478.2 L313.35 484.9 L319.6 478.2" fill="none" stroke="#555" stroke-width="1.3" stroke-linecap="round" stroke-linejoin="round" />
<path d="M128.4 542 L135.6 548.6 L128.4 555.2" fill="none" stroke="#555" stroke-width="1.7" stroke-linecap="round" stroke-linejoin="round" />
<path d="M170 537.4 H162 A3 3 0 0 0 159 540.4 V556.6 A3 3 0 0 0 162 559.6 H178 A3 3 0 0 0 181 556.6 V551 A3 3 0 0 0 178 548 H159 M170 537.4 V559.6" fill="none" stroke="#4a4a4a" stroke-width="1.8" stroke-linecap="round" stroke-linejoin="round" />
<path d="M176.6 535.8 L182.4 541.6 L176.6 547.4 L170.8 541.6 Z" fill="none" stroke="#4a4a4a" stroke-width="1.8" stroke-linecap="round" stroke-linejoin="round" />
<path d="M124.2 606 L130.8 613.6 L137.4 606" fill="none" stroke="#555" stroke-width="1.7" stroke-linecap="round" stroke-linejoin="round" />
<path d="M161.5 599.6 H179 A4.2 4.2 0 0 1 183.2 603.8 V613.6 A4.2 4.2 0 0 1 179 617.8 H161.5 A4.2 4.2 0 0 1 157.3 613.6 V603.8 A4.2 4.2 0 0 1 161.5 599.6 Z" fill="none" stroke="#4a4a4a" stroke-width="2" stroke-linecap="round" stroke-linejoin="round" />
<path d="M171.6 663 L178.4 669.8 L171.6 676.6" fill="none" stroke="#555" stroke-width="1.7" stroke-linecap="round" stroke-linejoin="round" />
<path d="M204 661.4 H221.8 A1.8 1.8 0 0 1 223.6 663.2 V665.8 A1.8 1.8 0 0 1 221.8 667.6 H204 A1.8 1.8 0 0 1 202.2 665.8 V663.2 A1.8 1.8 0 0 1 204 661.4 Z M204 671.4 H221.8 A1.8 1.8 0 0 1 223.6 673.2 V675.8 A1.8 1.8 0 0 1 221.8 677.6 H204 A1.8 1.8 0 0 1 202.2 675.8 V673.2 A1.8 1.8 0 0 1 204 671.4 Z" fill="none" stroke="#4a4a4a" stroke-width="2" stroke-linecap="round" stroke-linejoin="round" />
<path d="M124.2 727.6 L130.8 735 L137.4 727.6" fill="none" stroke="#555" stroke-width="1.7" stroke-linecap="round" stroke-linejoin="round" />
<path d="M161.5 721.4 H179 A4.2 4.2 0 0 1 183.2 725.6 V735.4 A4.2 4.2 0 0 1 179 739.6 H161.5 A4.2 4.2 0 0 1 157.3 735.4 V725.6 A4.2 4.2 0 0 1 161.5 721.4 Z" fill="none" stroke="#4a4a4a" stroke-width="2" stroke-linecap="round" stroke-linejoin="round" />
<path d="M167.6 788.2 L174.0 795.6 L180.4 788.2" fill="none" stroke="#555" stroke-width="1.7" stroke-linecap="round" stroke-linejoin="round" />
<path d="M204.4 783.2 H222.2 A1.8 1.8 0 0 1 224 785 V787.6 A1.8 1.8 0 0 1 222.2 789.4 H204.4 A1.8 1.8 0 0 1 202.6 787.6 V785 A1.8 1.8 0 0 1 204.4 783.2 Z M204.4 793 H222.2 A1.8 1.8 0 0 1 224 794.8 V797.4 A1.8 1.8 0 0 1 222.2 799.2 H204.4 A1.8 1.8 0 0 1 202.6 797.4 V794.8 A1.8 1.8 0 0 1 204.4 793 Z" fill="none" stroke="#4a4a4a" stroke-width="2" stroke-linecap="round" stroke-linejoin="round" />
<path d="M209.6 849 L216.3 856.4 L223 849" fill="none" stroke="#555" stroke-width="1.7" stroke-linecap="round" stroke-linejoin="round" />
<path d="M245.2 844.6 H254.2 V858.6 H245.2 Z M258.8 844.6 H267.8 V858.6 H258.8 Z" fill="none" stroke="#4a4a4a" stroke-width="1.9" stroke-linecap="round" stroke-linejoin="round" />
<path d="M252.4 910.2 L259.2 917.4 L266 910.2" fill="none" stroke="#555" stroke-width="1.7" stroke-linecap="round" stroke-linejoin="round" />
<path d="M287.8 905 H296.8 V919.2 H287.8 Z M301.40000000000003 905 H310.40000000000003 V919.2 H301.40000000000003 Z" fill="none" stroke="#4a4a4a" stroke-width="1.9" stroke-linecap="round" stroke-linejoin="round" />
<path d="M295 970.2 L301.7 977.4 L308.4 970.2" fill="none" stroke="#555" stroke-width="1.7" stroke-linecap="round" stroke-linejoin="round" />
<path d="M331.2 965.6 H337.4 V974.6 H331.2 Z M343.6 965.6 H350.4 V974.6 H343.6 Z M331 979.4 H343.2" fill="none" stroke="#4a4a4a" stroke-width="1.7" stroke-linecap="round" stroke-linejoin="round" />
<path d="M385 1023.4 H374.2 V1042.2 H393.4 V1031.6" fill="none" stroke="#444" stroke-width="1.8" stroke-linecap="round" stroke-linejoin="round" />
<path d="M377.6 1038.4 L378.8 1034.2 L391.6 1021.4 A1.9 1.9 0 0 1 394.6 1024.4 L381.8 1037.2 Z" fill="none" stroke="#3f9a98" stroke-width="1.6" stroke-linecap="round" stroke-linejoin="round" />
<path d="M333.4 1086.2 H348.6 A6.3 6.3 0 0 1 348.6 1098.8 H333.4 A6.3 6.3 0 0 1 333.4 1086.2 Z" fill="none" stroke="#4a4a4a" stroke-width="1.9" stroke-linecap="round" stroke-linejoin="round" />
<circle cx="334.4" cy="1092.6" r="2.0" fill="#4a4a4a"/>
<path d="M338.6 1092.6 H348.6" fill="none" stroke="#4a4a4a" stroke-width="1.9" stroke-linecap="round" stroke-linejoin="round" />
<path d="M246.6 1144.6 H264.6 A4.2 4.2 0 0 1 268.8 1148.8 V1159.6 A4.2 4.2 0 0 1 264.6 1163.8 H246.6 A4.2 4.2 0 0 1 242.4 1159.6 V1148.8 A4.2 4.2 0 0 1 246.6 1144.6 Z" fill="none" stroke="#4a4a4a" stroke-width="2" stroke-linecap="round" stroke-linejoin="round" />
<g clip-path="url(#treeclip)">
<path d="M209.6 1211 L216.3 1218.4 L223 1211" fill="none" stroke="#555" stroke-width="1.7" stroke-linecap="round" stroke-linejoin="round" />
<path d="M245.2 1205.6 H254.2 V1222 H245.2 Z M258.8 1205.6 H267.8 V1222 H258.8 Z" fill="none" stroke="#4a4a4a" stroke-width="1.9" stroke-linecap="round" stroke-linejoin="round" />
</g><defs><clipPath id="treeclip"><rect x="88" y="1000" width="499" height="218"/></clipPath></defs>
<path d="M1819 402.6 V389.2 M1813.6 394.6 L1819 389.2 L1824.4 394.6" fill="none" stroke="#b8b8b8" stroke-width="1.3" stroke-linecap="round" stroke-linejoin="round" />
<path d="M952 509.0 L957.25 514.3 L962.5 509.0" fill="none" stroke="#6a6a6a" stroke-width="1.25" stroke-linecap="round" stroke-linejoin="round" />
<path d="M952 584.8 L957.25 590.1 L962.5 584.8" fill="none" stroke="#6a6a6a" stroke-width="1.25" stroke-linecap="round" stroke-linejoin="round" />
<path d="M952 669.3 L957.25 674.6 L962.5 669.3" fill="none" stroke="#6a6a6a" stroke-width="1.25" stroke-linecap="round" stroke-linejoin="round" />
<path d="M952 807.0999999999999 L957.25 812.4 L962.5 807.0999999999999" fill="none" stroke="#6a6a6a" stroke-width="1.25" stroke-linecap="round" stroke-linejoin="round" />
<path d="M952 967.5999999999999 L957.25 972.9 L962.5 967.5999999999999" fill="none" stroke="#6a6a6a" stroke-width="1.25" stroke-linecap="round" stroke-linejoin="round" />
<path d="M1027.1 944.2 V934.6 A3.2 3.2 0 0 1 1033.5 934.6 V945 A3.2 3.2 0 0 1 1027.1 945" fill="none" stroke="#3a3a3a" stroke-width="1.6" stroke-linecap="round" stroke-linejoin="round" />
<path d="M1030.3 936.4 V945.4" fill="none" stroke="#3a3a3a" stroke-width="1.3" stroke-linecap="round" stroke-linejoin="round" />
<path d="M1472.6 944.2 V934.6 A3.2 3.2 0 0 1 1479.0 934.6 V945 A3.2 3.2 0 0 1 1472.6 945" fill="none" stroke="#3a3a3a" stroke-width="1.6" stroke-linecap="round" stroke-linejoin="round" />
<path d="M1475.8 936.4 V945.4" fill="none" stroke="#3a3a3a" stroke-width="1.3" stroke-linecap="round" stroke-linejoin="round" />
<circle cx="620.6" cy="1205.3" r="1.5" fill="#333"/>
<circle cx="627.6" cy="1205.3" r="1.5" fill="#333"/>
<circle cx="634.6" cy="1205.3" r="1.5" fill="#333"/>
<path d="M660.4 1170.5 L679 1203.2 L660.4 1236" fill="none" stroke="#d2d2d2" stroke-width="1.2" stroke-linecap="round" stroke-linejoin="round" />
<path d="M888 1170.5 L906 1203.2 L888 1236" fill="none" stroke="#d2d2d2" stroke-width="1.2" stroke-linecap="round" stroke-linejoin="round" />
<path d="M1075.3 1170.5 L1093 1203.2 L1075.3 1236" fill="none" stroke="#d2d2d2" stroke-width="1.2" stroke-linecap="round" stroke-linejoin="round" />
<path d="M696.6 1192.6 H706.4 V1218.6 H696.6 Z M712.6 1192.6 H723 V1218.6 H712.6 Z" fill="none" stroke="#444" stroke-width="2" stroke-linecap="round" stroke-linejoin="round" />
<rect x="922.5" y="1192.5" width="11" height="10.6" fill="#7fc6c6" stroke="#3e8f8f" stroke-width="1.6"/>
<rect x="936.6" y="1192.5" width="11" height="10.6" fill="#f5d28e" stroke="#e9b25a" stroke-width="1.6"/>
<rect x="922.5" y="1206.6" width="11" height="10.6" fill="#a9a9a9" stroke="#6a6a6a" stroke-width="1.6"/>
<rect x="936.6" y="1206.6" width="11" height="10.6" fill="#8cbf8c" stroke="#4e9e4e" stroke-width="1.6"/>
<path d="M1128 1196 H1115 V1215.4 H1134 V1202.6" fill="none" stroke="#333" stroke-width="1.7" stroke-linecap="round" stroke-linejoin="round" stroke-linecap="butt" stroke-linejoin="miter"/>
<path d="M1118.2 1211.8 L1119.6 1207 L1132.4 1194.8 A2 2 0 0 1 1135.4 1197.6 L1122.8 1210.2 Z" fill="none" stroke="#3f9a98" stroke-width="1.6" stroke-linecap="round" stroke-linejoin="round" />
<path d="M1441.6 1205.8 H1466.2" fill="none" stroke="#444" stroke-width="1.6" stroke-linecap="round" stroke-linejoin="round" />
<path d="M1497.6 1205.8 H1560" fill="none" stroke="#555" stroke-width="3" stroke-linecap="round" stroke-linejoin="round" />
<path d="M1570 1205.8 H1770.6" fill="none" stroke="#c9c9c9" stroke-width="3" stroke-linecap="round" stroke-linejoin="round" />
<circle cx="1565.4" cy="1205.8" r="13.6" fill="#fff" stroke="#d6d6d6" stroke-width="1"/>
<circle cx="1565.4" cy="1205.8" r="8.6" fill="#606060"/>
<path d="M1812.9 1192 V1218.2 M1799.8 1205.1 H1826" fill="none" stroke="#333" stroke-width="1.6" stroke-linecap="round" stroke-linejoin="round" />
<path d="M1927.2 1216.8 L1950.4 1194.2 M1936.2 1194.2 H1950.4 V1206 M1927.2 1205.2 V1216.8 H1938" fill="none" stroke="#333" stroke-width="1.7" stroke-linecap="round" stroke-linejoin="round" />
<circle cx="2105.6" cy="372" r="12.4" fill="none" stroke="#555" stroke-width="1.5"/>
<path d="M2101.8 368.4 A3.9 3.9 0 1 1 2107.6 371.6 C2106.2 372.6 2105.6 373.4 2105.6 375.2" fill="none" stroke="#555" stroke-width="1.5" stroke-linecap="round" stroke-linejoin="round" />
<circle cx="2105.6" cy="379.2" r="1.0" fill="#555"/>
<path d="M2495.8 614 L2503.2 622 L2510.6 614" fill="none" stroke="#c4c4c4" stroke-width="1.3" stroke-linecap="round" stroke-linejoin="round" />
<path d="M2495.2 727 L2502.8999999999996 736.6 L2510.6 727" fill="none" stroke="#333" stroke-width="1.6" stroke-linecap="round" stroke-linejoin="round" />
<path d="M2495.8 1013.2 L2503.2 1021.8 L2510.6 1013.2" fill="none" stroke="#333" stroke-width="1.6" stroke-linecap="round" stroke-linejoin="round" />
<path d="M2495.8 1070.2 L2503.2 1078.8 L2510.6 1070.2" fill="none" stroke="#333" stroke-width="1.6" stroke-linecap="round" stroke-linejoin="round" />
<path d="M2314.8 780.4 L2308.8 800.4" fill="none" stroke="#333" stroke-width="1.6" stroke-linecap="round" stroke-linejoin="round" />
<path d="M2391.8 780.4 V791.6 A5.8 5.8 0 0 0 2403.4 791.6 V780.4 M2390.6 801 H2404.6" fill="none" stroke="#333" stroke-width="1.5" stroke-linecap="round" stroke-linejoin="round" />
<text x="2483.4" y="793.6" font-family="Liberation Sans" font-size="11" fill="#333" text-anchor="middle">abc</text>
<path d="M2473.4 790 H2493.4" fill="none" stroke="#333" stroke-width="1.2" stroke-linecap="round" stroke-linejoin="round" />
<path d="M2289.6 836.1 H2310.7999999999997" fill="none" stroke="#1a1a1a" stroke-width="1.4" stroke-linecap="round" stroke-linejoin="round" />
<path d="M2289.6 840.13 H2305.4" fill="none" stroke="#1a1a1a" stroke-width="1.4" stroke-linecap="round" stroke-linejoin="round" />
<path d="M2289.6 844.16 H2310.7999999999997" fill="none" stroke="#1a1a1a" stroke-width="1.4" stroke-linecap="round" stroke-linejoin="round" />
<path d="M2289.6 848.19 H2305.4" fill="none" stroke="#1a1a1a" stroke-width="1.4" stroke-linecap="round" stroke-linejoin="round" />
<path d="M2289.6 852.22 H2310.7999999999997" fill="none" stroke="#1a1a1a" stroke-width="1.4" stroke-linecap="round" stroke-linejoin="round" />
<path d="M2354.4 836.1 H2375.6" fill="none" stroke="#1a1a1a" stroke-width="1.4" stroke-linecap="round" stroke-linejoin="round" />
<path d="M2357.1 840.13 H2372.9" fill="none" stroke="#1a1a1a" stroke-width="1.4" stroke-linecap="round" stroke-linejoin="round" />
<path d="M2354.4 844.16 H2375.6" fill="none" stroke="#1a1a1a" stroke-width="1.4" stroke-linecap="round" stroke-linejoin="round" />
<path d="M2357.1 848.19 H2372.9" fill="none" stroke="#1a1a1a" stroke-width="1.4" stroke-linecap="round" stroke-linejoin="round" />
<path d="M2354.4 852.22 H2375.6" fill="none" stroke="#1a1a1a" stroke-width="1.4" stroke-linecap="round" stroke-linejoin="round" />
<path d="M2418.4 836.1 H2439.6" fill="none" stroke="#1a1a1a" stroke-width="1.4" stroke-linecap="round" stroke-linejoin="round" />
<path d="M2423.8 840.13 H2439.6000000000004" fill="none" stroke="#1a1a1a" stroke-width="1.4" stroke-linecap="round" stroke-linejoin="round" />
<path d="M2418.4 844.16 H2439.6" fill="none" stroke="#1a1a1a" stroke-width="1.4" stroke-linecap="round" stroke-linejoin="round" />
<path d="M2423.8 848.19 H2439.6000000000004" fill="none" stroke="#1a1a1a" stroke-width="1.4" stroke-linecap="round" stroke-linejoin="round" />
<path d="M2418.4 852.22 H2439.6" fill="none" stroke="#1a1a1a" stroke-width="1.4" stroke-linecap="round" stroke-linejoin="round" />
<path d="M2483.6 836.1 H2504.7999999999997" fill="none" stroke="#1a1a1a" stroke-width="1.4" stroke-linecap="round" stroke-linejoin="round" />
<path d="M2483.6 840.13 H2504.7999999999997" fill="none" stroke="#1a1a1a" stroke-width="1.4" stroke-linecap="round" stroke-linejoin="round" />
<path d="M2483.6 844.16 H2504.7999999999997" fill="none" stroke="#1a1a1a" stroke-width="1.4" stroke-linecap="round" stroke-linejoin="round" />
<path d="M2483.6 848.19 H2504.7999999999997" fill="none" stroke="#1a1a1a" stroke-width="1.4" stroke-linecap="round" stroke-linejoin="round" />
<path d="M2483.6 852.22 H2504.7999999999997" fill="none" stroke="#1a1a1a" stroke-width="1.4" stroke-linecap="round" stroke-linejoin="round" /></svg>
</body></html>
